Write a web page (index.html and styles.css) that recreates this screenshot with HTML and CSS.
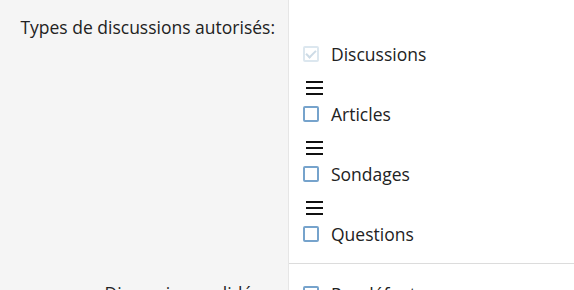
FILE: index.html
```html
<!DOCTYPE html>
<html lang="fr">
<head>
  <meta charset="UTF-8" />
  <title>Types de discussions</title>
  <link rel="stylesheet" href="styles.css">
</head>
<body>

<div class="form-row">
  <div class="row-label">Types de discussions autorisés:</div>
  <div class="row-field first">
    <label class="type-item"><input type="checkbox" checked disabled> Discussions</label>
    <div class="handle"><span></span><span></span><span></span></div>
    <label class="type-item"><input type="checkbox"> Articles</label>
    <div class="handle"><span></span><span></span><span></span></div>
    <label class="type-item"><input type="checkbox"> Sondages</label>
    <div class="handle"><span></span><span></span><span></span></div>
    <label class="type-item"><input type="checkbox"> Questions</label>
  </div>
</div>

<div class="form-row">
  <div class="row-label next">Discussions validées:</div>
  <div class="row-field">
    <label class="type-item"><input type="checkbox"> Par défaut</label>
  </div>
</div>

</body>
</html>
```

FILE: styles.css
```css
body {
  margin: 0;
  font-family: 'Open Sans', sans-serif;
  font-size: 17.5px;
  color: #222;
  background: #fff;
}
.form-row {
  display: flex;
}
.row-label {
  flex: none;
  box-sizing: border-box;
  width: 289px;
  background: #f5f5f5;
  border-right: 1px solid #e6e6e6;
  padding: 15px 13px 0 0;
  text-align: right;
  line-height: 24px;
}
.row-label.next {
  padding-top: 17px;
}
.row-field {
  flex: 1;
  padding: 18px 0 18px 14px;
  border-bottom: 1px solid #dcdcdc;
}
.row-field.first {
  padding-top: 42px;
  padding-bottom: 17px;
}
.type-item {
  display: flex;
  align-items: center;
  height: 24px;
  gap: 12px;
}
.type-item input {
  appearance: none;
  -webkit-appearance: none;
  box-sizing: border-box;
  width: 16px;
  height: 16px;
  margin: 0;
  border: 2px solid #76a3cc;
  border-radius: 2px;
  background: #fff;
  position: relative;
}
.type-item input:disabled {
  border-color: #dce7ef;
}
.type-item input:checked::after {
  content: "";
  position: absolute;
  left: 3px;
  top: 0;
  width: 4px;
  height: 8px;
  border: solid #cddbe6;
  border-width: 0 2px 2px 0;
  transform: rotate(45deg);
}
.handle {
  display: flex;
  flex-direction: column;
  justify-content: center;
  gap: 4px;
  width: 17px;
  height: 20px;
  margin: 12px 0 4px 3px;
}
.handle span {
  height: 2px;
  background: #111;
}
```
